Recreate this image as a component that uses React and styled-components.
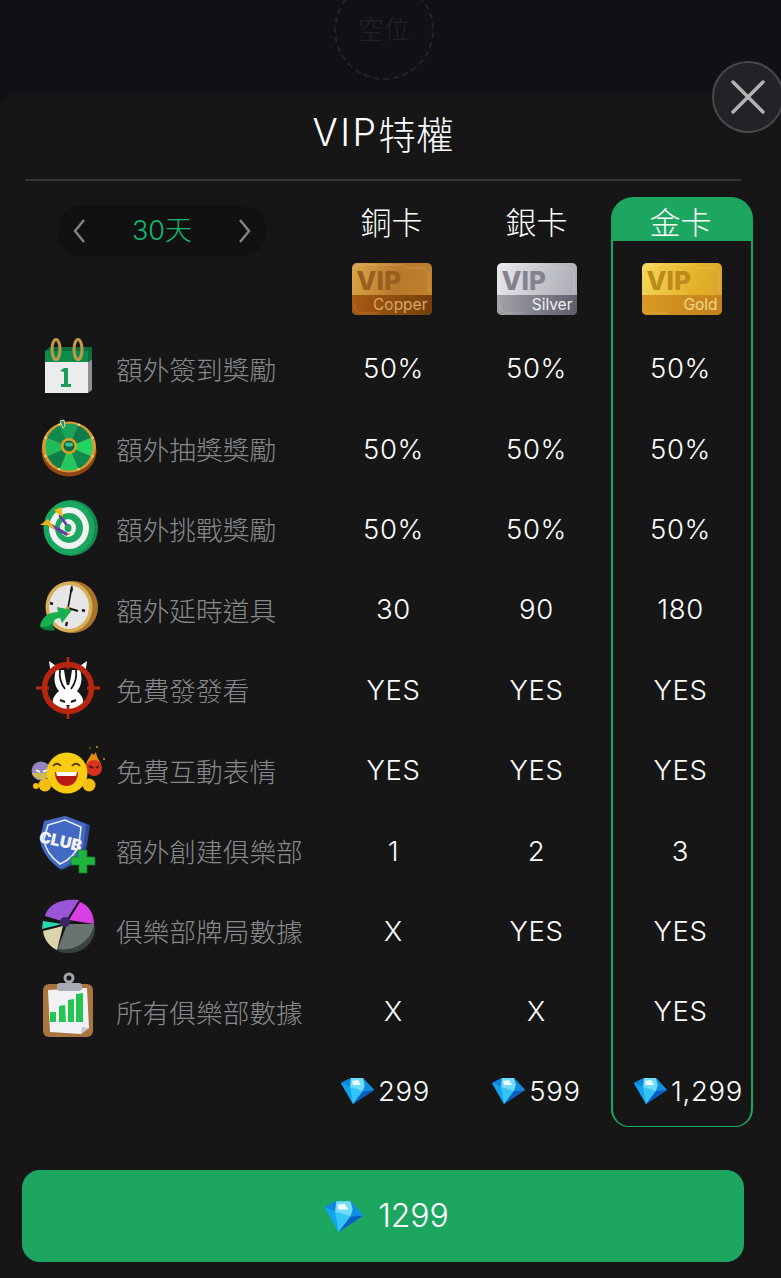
import React from "react";
import styled, { createGlobalStyle } from "styled-components";

const GlobalStyle = createGlobalStyle`
  html, body { margin: 0; padding: 0; background: #101114; }
  body { font-family: Inter, "Noto Sans CJK TC", sans-serif; }
  #root { width: 781px; height: 1278px; overflow: hidden; }
`;

const CJK = `Inter, "Noto Sans CJK TC", sans-serif`;
const GREEN = "#1da65f";

const Page = styled.div`
  position: relative;
  width: 781px;
  height: 1278px;
  padding-top: 92px;
  box-sizing: border-box;
  overflow: hidden;
  background: repeating-linear-gradient(45deg, #111216 0 2px, #101114 2px 4px);
`;
const Seat = styled.div`
  position: absolute;
  left: 334px;
  top: -20px;
  width: 96px;
  height: 90px;
  padding-bottom: 6px;
  border: 2px dashed #242528;
  border-radius: 50%;
  display: flex;
  align-items: center;
  justify-content: center;
  font: 300 26px ${CJK};
  color: #222327;
`;
const CloseButton = styled.button`
  position: absolute;
  left: 712px;
  top: 61px;
  width: 72px;
  height: 72px;
  padding: 0;
  border: 2px solid #47484a;
  border-radius: 50%;
  background: #222326;
  display: flex;
  align-items: center;
  justify-content: center;
  z-index: 2;
`;
const Sheet = styled.section`
  height: 1186px;
  background: #161616;
  border-radius: 22px 22px 0 0;
  box-sizing: border-box;
`;
const Title = styled.h1`
  margin: 0 40px 0 25px;
  height: 89px;
  padding-bottom: 7px;
  box-sizing: border-box;
  border-bottom: 2px solid #33373b;
  display: flex;
  align-items: center;
  justify-content: center;
  font: 300 37.5px ${CJK};
  color: #fff;
`;
const TitleLatin = styled.span`
  letter-spacing: 2.5px;
`;
const Table = styled.div`
  display: grid;
  width: 753px;
  margin-top: 16px;
  grid-template-columns: 322px 143px 143px 145px;
  grid-template-rows: 44px 87px repeat(9, 80.4px) 75.4px;
`;
const GoldFrame = styled.div`
  grid-column: 4;
  grid-row: 1 / -1;
  justify-self: end;
  width: 142px;
  box-sizing: border-box;
  border: 2px solid ${GREEN};
  border-bottom-width: 1px;
  border-radius: 22px 22px 18px 18px;
  background: linear-gradient(${GREEN} 42px, transparent 42px);
`;
const Pager = styled.div`
  grid-column: 1;
  grid-row: 1 / span 2;
  align-self: start;
  margin: 8px 0 0 57px;
  width: 210px;
  height: 51px;
  padding: 0 15px;
  box-sizing: border-box;
  border-radius: 26px;
  background: #111111;
  display: flex;
  align-items: center;
  justify-content: space-between;
`;
const PagerLabel = styled.span`
  font: 300 27px ${CJK};
  color: #12b76a;
  padding-bottom: 5px;
`;
const TierName = styled.div`
  grid-column: ${(p) => p.$col};
  grid-row: 1;
  display: flex;
  align-items: center;
  justify-content: center;
  padding-top: 2px;
  padding-right: ${(p) => p.$inset}px;
  font: 300 31px ${CJK};
  color: #fff;
`;
const MedalCell = styled.div`
  grid-column: ${(p) => p.$col};
  grid-row: 2;
  display: flex;
  justify-content: center;
  padding-top: 22px;
  padding-right: ${(p) => p.$inset}px;
  padding-left: ${(p) => p.$lead}px;
`;
const Medal = styled.div`
  position: relative;
  width: 80px;
  height: 52px;
  border-radius: 5px;
  overflow: hidden;
  background: linear-gradient(105deg, ${(p) => p.$from}, ${(p) => p.$mid} 55%, ${(p) => p.$to});
  font-family: Inter, sans-serif;
`;
const MedalBand = styled.div`
  position: absolute;
  left: 0;
  right: 0;
  bottom: 0;
  height: 20px;
  padding-right: 4px;
  box-sizing: border-box;
  text-align: right;
  font-size: 15.5px;
  line-height: 20px;
  color: ${(p) => p.$ink};
  background: linear-gradient(100deg, ${(p) => p.$from}, ${(p) => p.$to});
`;
const MedalVip = styled.div`
  position: absolute;
  left: 5px;
  top: 3px;
  font-size: 26px;
  line-height: 30px;
  font-weight: 800;
  color: ${(p) => p.$ink};
`;
const MedalLines = styled.svg`
  position: absolute;
  inset: 0;
  width: 80px;
  height: 52px;
`;
const FeatureCell = styled.div`
  grid-column: 1;
  grid-row: ${(p) => p.$row};
  display: flex;
  align-items: center;
  gap: 11px;
  padding-left: 29px;
`;
const FeatureIcon = styled.svg`
  flex: none;
  width: 76px;
  height: 70px;
  overflow: visible;
`;
const FeatureLabel = styled.span`
  font: 300 26.7px ${CJK};
  color: #88898d;
  white-space: nowrap;
`;
const Value = styled.div`
  grid-column: ${(p) => p.$col};
  grid-row: ${(p) => p.$row};
  display: flex;
  align-items: center;
  justify-content: center;
  font: 300 27.5px ${CJK};
  letter-spacing: 0.7px;
  color: #fff;
`;
const Price = styled(Value)`
  gap: 4px;
  padding-top: 3px;
  padding-right: ${(p) => p.$right}px;
  padding-left: ${(p) => p.$left}px;
`;
const BuyButton = styled.button`
  display: flex;
  align-items: center;
  justify-content: center;
  gap: 14px;
  width: 722px;
  height: 92px;
  margin: 43px 0 0 22px;
  padding: 0 0 0 7px;
  border: 0;
  border-radius: 18px;
  background: ${GREEN};
  color: #fff;
  font: 300 32px ${CJK};
`;

const Diamond = ({ w = 33, h = 27 }) => (
  <svg width={w} height={h} viewBox="0 0 33 27" aria-hidden="true">
    <path d="M0 6 10 1H22L33 13 12 27Z" fill="#18a0ea" />
    <path d="M0 6 10 1 9 10Z" fill="#0d86dc" />
    <path d="M0 6 9 10 12 27Z" fill="#12a4ee" />
    <path d="M9 10 22 14 12 27Z" fill="#35c4f6" />
    <path d="M22 14 33 13 12 27Z" fill="#0a5cc0" />
    <path d="M10 1H22L24 8 22 14 9 10Z" fill="#6fdcfb" />
    <path d="M11 4 17 3 20 8 12 8Z" fill="#f0fdff" />
    <path d="M22 1 33 13 22 14 24 8Z" fill="#0f8ede" />
  </svg>
);

const Chevron = ({ left }) => (
  <svg width="14" height="26" viewBox="0 0 14 26" aria-hidden="true">
    <path d={left ? "M12 2 3 13l9 11" : "M2 2l9 11-9 11"} fill="none" stroke="#858585" strokeWidth="2.4" />
  </svg>
);

const CalendarIcon = () => (
  <FeatureIcon viewBox="0 0 76 70">
    <path d="M59 29 63 26V57L59 60Z" fill="#8d8f91" />
    <rect x="16" y="29" width="43" height="31" fill="#ececec" />
    <path d="M16 18 21 14H63V26L59 29H16Z" fill="#0a6f3b" />
    <path d="M16 18H59V29H16Z" fill="#0c8d4c" />
    <ellipse cx="27" cy="16.5" rx="4" ry="10" fill="none" stroke="#c4984a" strokeWidth="3" />
    <ellipse cx="49" cy="16.5" rx="4" ry="10" fill="none" stroke="#c4984a" strokeWidth="3" />
    <path d="M31 38 35 35H39V51H42V54H32V51H35V39Z" fill="#1c9c5b" />
  </FeatureIcon>
);

const WheelIcon = () => {
  const wedges = ["#17a457", "#0f7a4b", "#22d364", "#0f8a4e", "#25c860", "#0f7d4a", "#1fbb5a", "#118a50"];
  const cx = 40, cy = 33, r = 23.5;
  const dots = [0, 1, 2, 3, 4, 5, 6, 7];
  return (
    <FeatureIcon viewBox="0 0 76 70">
      <ellipse cx="40" cy="37" rx="27.5" ry="25.5" fill="#8e4614" />
      <ellipse cx="40" cy="33" rx="27" ry="25.5" fill="#d59a34" />
      {wedges.map((c, i) => {
        const a = (i * Math.PI) / 4 - Math.PI / 2 - Math.PI / 8;
        const b = a + Math.PI / 4;
        return (
          <path
            key={i}
            d={`M${cx} ${cy}L${cx + r * Math.cos(a)} ${cy + r * Math.sin(a)}A${r} ${r} 0 0 1 ${cx + r * Math.cos(b)} ${cy + r * Math.sin(b)}Z`}
            fill={c}
          />
        );
      })}
      {dots.map((i) => (
        <circle
          key={i}
          cx={40 + 25.5 * Math.cos((i * Math.PI) / 4 + 0.4)}
          cy={33 + 24 * Math.sin((i * Math.PI) / 4 + 0.4)}
          r="1.1"
          fill="#f8e58a"
        />
      ))}
      <circle cx="40" cy="32" r="8" fill="#e0a21f" />
      <circle cx="40" cy="32" r="5.5" fill="#0c6b45" />
      <ellipse cx="40" cy="30.5" rx="4" ry="2" fill="#3cc48a" />
      <path d="M31 7 35 6 36 12 34 14Z" fill="#2a8d5a" stroke="#e8dca0" strokeWidth="1" />
    </FeatureIcon>
  );
};

const TargetIcon = () => (
  <FeatureIcon viewBox="0 0 76 70">
    <ellipse cx="42" cy="34" rx="27" ry="28" fill="#0f8a50" />
    <ellipse cx="40" cy="34" rx="25.5" ry="27" fill="#1ba75f" />
    <ellipse cx="40" cy="34" rx="20" ry="21" fill="#f2f2f2" />
    <ellipse cx="40" cy="34" rx="14" ry="15" fill="#1ba75f" />
    <ellipse cx="39" cy="34" rx="8" ry="9" fill="#f2f2f2" />
    <ellipse cx="39" cy="34" rx="3.5" ry="4" fill="#1ba75f" />
    <path d="M38 40 41 40" stroke="#f0b21f" strokeWidth="2" />
    <path d="M23 32 37 40" stroke="#5f3f9e" strokeWidth="3.4" strokeLinecap="round" />
    <path d="M11 31 19 25 27 36 18 31Z" fill="#eeb31a" />
    <path d="M31 22 37 30" stroke="#5f3f9e" strokeWidth="2.8" strokeLinecap="round" />
    <path d="M25 16 32 13 34 23 29 20Z" fill="#eeb31a" />
  </FeatureIcon>
);

const ClockIcon = () => (
  <FeatureIcon viewBox="0 0 76 70">
    <ellipse cx="44" cy="33" rx="25" ry="26" fill="#a8742a" />
    <ellipse cx="40" cy="33" rx="23.5" ry="25.5" fill="#d8ae58" />
    <ellipse cx="40" cy="33" rx="20" ry="22" fill="#e6e6e4" />
    <g stroke="#1a1a1a" strokeWidth="2.4">
      <path d="M43 14 42 18M37 52 38 48M21 29 24 30M56 37 53 36" />
    </g>
    <path d="M39 34 43 12" stroke="#151515" strokeWidth="1.6" />
    <path d="M39 34 49 37" stroke="#151515" strokeWidth="2.2" />
    <circle cx="39" cy="34" r="1.8" fill="#c88c1e" />
    <path d="M11 52C13 42 21 38 29 38L28 33 43 36 33 49 31 44C24 44 22 51 26 56 18 57 13 56 11 52Z" fill="#18b04e" />
    <path d="M11 52C15 57 21 57 26 56 24 54 23 51 24 49 20 53 15 54 11 52Z" fill="#0a7a38" />
  </FeatureIcon>
);

const RabbitIcon = () => (
  <FeatureIcon viewBox="0 0 76 70">
    <path d="M20 6 30 13 22 20ZM58 6 48 13 56 20Z" fill="#fff" />
    <path d="M27 15H35C36 22 37 27 38 30H40C41 27 42 22 43 15H51C54 24 52 32 48 36 54 41 56 47 53 52L44 57 39 54 34 57 25 52C22 47 24 41 30 36 26 32 24 24 27 15Z" fill="#fff" />
    <path d="M31 14C30 22 32 29 36 34M47 14C48 22 46 29 42 34" fill="none" stroke="#161616" strokeWidth="1.8" />
    <path d="M31 45 36 47M47 45 42 47" stroke="#161616" strokeWidth="2" />
    <path d="M37 50H41L39 53Z" fill="#161616" />
    <circle cx="39" cy="33" r="23.5" fill="none" stroke="#b8250f" strokeWidth="5.5" />
    <path d="M39 2V14M39 52V64M7 33H20M58 33H71" stroke="#b8250f" strokeWidth="2.8" />
  </FeatureIcon>
);

const EmojiIcon = () => (
  <FeatureIcon viewBox="0 0 76 70">
    <path d="M63 18C60 24 55 28 58 34 60 40 70 40 72 33 73 27 68 25 67 17 65 20 65 21 63 18Z" fill="#e8890f" />
    <circle cx="65" cy="33" r="8" fill="#d6331f" />
    <path d="M60 31 64 33M70 31 67 33" stroke="#3a0a05" strokeWidth="1.4" />
    <circle cx="75" cy="24" r="1" fill="#d99416" />
    <circle cx="68" cy="12" r="1" fill="#d99416" />
    <circle cx="61" cy="13" r="0.8" fill="#d99416" />
    <circle cx="12" cy="36" r="9.5" fill="#9584bd" />
    <path d="M3 38C6 46 18 46 21 38Z" fill="#cdbb55" />
    <path d="M7 35 11 37M18 35 14 37" stroke="#fff" strokeWidth="1.6" />
    <circle cx="38" cy="38" r="20.5" fill="#f8cc10" />
    <path d="M24 31C26 28 30 28 32 31M43 31C45 28 49 28 51 31" fill="none" stroke="#5c3a05" strokeWidth="1.8" />
    <path d="M26 37H49C49 47 43 51 37.5 51S26 47 26 37Z" fill="#b91a16" />
    <path d="M27 37H48L47 41H28Z" fill="#fff" />
    <circle cx="16" cy="50" r="6.5" fill="#f5bd0e" />
    <circle cx="60" cy="50" r="6.5" fill="#f5bd0e" />
    <circle cx="7" cy="51" r="3" fill="#f5bd0e" />
  </FeatureIcon>
);

const ClubText = styled.text`
  font: 900 16px Inter, sans-serif;
  fill: #f2f2f2;
`;
const ClubIcon = () => (
  <FeatureIcon viewBox="0 0 76 70">
    <path d="M16 6 37 0 61 9 58 30C55 42 45 49 33 54 22 46 13 36 12 24Z" fill="#2f4a90" />
    <path d="M15 5 36 0 57 8 55 29C52 41 43 48 31 53 20 45 12 35 11 23Z" fill="#4269c4" />
    <path d="M19 9 36 4 52 11 50 28C47 38 40 44 31 48 23 42 16 34 15 23Z" fill="none" stroke="#e8eefb" strokeWidth="1.6" />
    <ClubText x="10" y="31" transform="rotate(13 32 25)">CLUB</ClubText>
    <path d="M49 34H58V41H66V49H58V57H50V49H42V41H49Z" fill="#1fb53d" stroke="#0f7a28" strokeWidth="0.8" />
  </FeatureIcon>
);

const PieIcon = () => (
  <FeatureIcon viewBox="0 0 76 70">
    <path d="M66 30C67 46 54 58 38 57 33 57 30 56 27 54L38 30Z" fill="#39423f" />
    <path d="M38 28H65C64 42 48 56 29 53Z" fill="#6a736f" />
    <path d="M34 30 14 35C15 44 21 51 28 54Z" fill="#dcd5ac" />
    <path d="M33 28 14 25 13 33Z" fill="#2cd8ae" />
    <path d="M36 26 16 20C18 10 30 2 50 4Z" fill="#9a55d8" />
    <path d="M40 24 51 6C60 9 65 18 65 28Z" fill="#d93ee2" />
    <circle cx="36" cy="26" r="5" fill="#3c2468" />
  </FeatureIcon>
);

const ClipboardIcon = () => (
  <FeatureIcon viewBox="0 0 76 70">
    <rect x="14" y="8" width="50" height="53" rx="6" fill="#a8743f" />
    <path d="M19 14 58 12 60 52 52 58 21 56Z" fill="#f2f2f6" />
    <path d="M52 58 53 51 60 52Z" fill="#c8c8d0" />
    <circle cx="40" cy="2" r="4" fill="none" stroke="#a3a5ad" strokeWidth="3" />
    <rect x="28" y="7" width="25" height="8" rx="3" fill="#a9abb3" />
    <g fill="#24c651">
      <path d="M21 36 27 36 27 46 21 46Z" />
      <path d="M30 30 36 29 37 46 30 46Z" />
      <path d="M39 24 45 23 45 46 39 46Z" />
      <path d="M47 18 54 17 54 46 47 46Z" />
    </g>
  </FeatureIcon>
);

const TIERS = [
  { name: "銅卡", tag: "Copper", from: "#dca648", mid: "#b9782c", to: "#c0842c", vip: "#96601f", bandFrom: "#a85c12", bandTo: "#733f0d", ink: "#d9a860", price: "299", col: 2, inset: 4, lead: 0, right: 16, left: 0 },
  { name: "銀卡", tag: "Silver", from: "#e9e9ee", mid: "#c3c3ca", to: "#a8a8b0", vip: "#83838d", bandFrom: "#a3a3ab", bandTo: "#5d5d68", ink: "#eeeef0", price: "599", col: 3, inset: 0, lead: 0, right: 0, left: 0 },
  { name: "金卡", tag: "Gold", from: "#f5d85c", mid: "#e5b52c", to: "#d8a227", vip: "#bd8a1c", bandFrom: "#d99a22", bandTo: "#c2801b", ink: "#f0d88a", price: "1,299", col: 4, inset: 0, lead: 2, right: 0, left: 16 },
];

const FEATURES = [
  { Icon: CalendarIcon, label: "額外簽到獎勵", values: ["50%", "50%", "50%"] },
  { Icon: WheelIcon, label: "額外抽獎獎勵", values: ["50%", "50%", "50%"] },
  { Icon: TargetIcon, label: "額外挑戰獎勵", values: ["50%", "50%", "50%"] },
  { Icon: ClockIcon, label: "額外延時道具", values: ["30", "90", "180"] },
  { Icon: RabbitIcon, label: "免費發發看", values: ["YES", "YES", "YES"] },
  { Icon: EmojiIcon, label: "免費互動表情", values: ["YES", "YES", "YES"] },
  { Icon: ClubIcon, label: "額外創建俱樂部", values: ["1", "2", "3"] },
  { Icon: PieIcon, label: "俱樂部牌局數據", values: ["X", "YES", "YES"] },
  { Icon: ClipboardIcon, label: "所有俱樂部數據", values: ["X", "X", "YES"] },
];

export default function App() {
  return (
    <Page>
      <GlobalStyle />
      <Seat>空位</Seat>
      <CloseButton aria-label="close">
        <svg width="36" height="34" viewBox="0 0 36 34" aria-hidden="true">
          <path d="M3 2 33 32M33 2 3 32" stroke="#b2b2b2" strokeWidth="3.4" strokeLinecap="round" />
        </svg>
      </CloseButton>
      <Sheet>
        <Title><TitleLatin>VIP</TitleLatin>特權</Title>
        <Table>
          <GoldFrame />
          <Pager>
            <Chevron left />
            <PagerLabel>30天</PagerLabel>
            <Chevron />
          </Pager>
          {TIERS.map((t) => (
            <React.Fragment key={t.name}>
              <TierName $col={t.col} $inset={t.inset}>{t.name}</TierName>
              <MedalCell $col={t.col} $inset={t.inset} $lead={t.lead}>
                <Medal $from={t.from} $mid={t.mid} $to={t.to}>
                  <MedalVip $ink={t.vip}>VIP</MedalVip>
                  <MedalBand $from={t.bandFrom} $to={t.bandTo} $ink={t.ink}>{t.tag}</MedalBand>
                  <MedalLines viewBox="0 0 80 52" aria-hidden="true">
                    <path d="M3 5 6 2H52L56 5H72L77 10V30M3 40V46L8 50H26" fill="none" stroke="#fff" strokeOpacity="0.22" strokeWidth="0.8" />
                  </MedalLines>
                </Medal>
              </MedalCell>
            </React.Fragment>
          ))}
          {FEATURES.map(({ Icon, label, values }, i) => (
            <React.Fragment key={label}>
              <FeatureCell $row={i + 3}>
                <Icon />
                <FeatureLabel>{label}</FeatureLabel>
              </FeatureCell>
              {values.map((v, j) => (
                <Value key={j} $col={j + 2} $row={i + 3}>{v}</Value>
              ))}
            </React.Fragment>
          ))}
          {TIERS.map((t) => (
            <Price key={t.name} $col={t.col} $row={12} $right={t.right} $left={t.left}>
              <Diamond />
              {t.price}
            </Price>
          ))}
        </Table>
        <BuyButton>
          <Diamond w={40} h={32} />
          1299
        </BuyButton>
      </Sheet>
    </Page>
  );
}
